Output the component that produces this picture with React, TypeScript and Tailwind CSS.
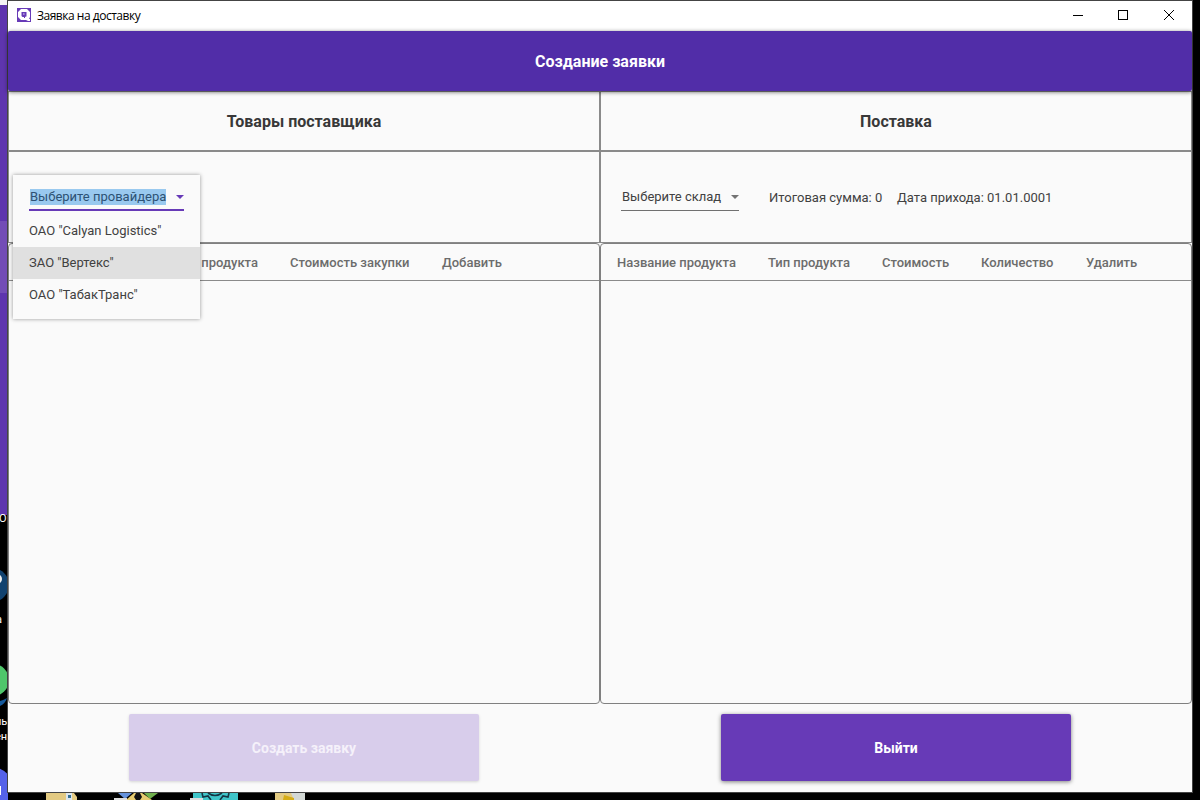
import React from "react";

const providers = ['ОАО "Calyan Logistics"', 'ЗАО "Вертекс"', 'ОАО "ТабакТранс"'];

function TitleBar() {
  return (
    <div className="flex h-[30px] shrink-0 items-center bg-white pl-[9px]">
      <svg width="14" height="14" viewBox="0 0 14 14" className="mb-0.5">
        <rect width="14" height="14" fill="#673ab7" />
        <path d="M4 1h6l3 3v5l-1 2h1v2h-2l-2-1H4L1 9V4z" fill="#fff" />
        <path d="M4.5 4h5v4.5H9l-1 .5v1H7V9H5.5l-1-1z" fill="#673ab7" />
        <path d="M6 5.2h1.6v1.6H6z" fill="#b9a4de" />
      </svg>
      <span className="ml-1.5 grow font-['Open_Sans',sans-serif] text-[12px] leading-4 tracking-[-0.48px] text-black">Заявка на доставку</span>
      <svg width="106" height="12" viewBox="0 0 106 12" fill="none" stroke="#000" className="mr-[14px] mb-0.5" shapeRendering="crispEdges">
        <path d="M1 6.5h10M46.5 1.5h9v9h-9z" />
        <path d="M92 1l10 10M102 1l-10 10" shapeRendering="auto" />
      </svg>
    </div>
  );
}

function Arrow({ color }: { color: string }) {
  return (
    <svg width="8" height="4" viewBox="0 0 8 4" className="shrink-0">
      <path d="M0 0h8L4 4z" fill={color} />
    </svg>
  );
}

function Header({ children }: { children: React.ReactNode }) {
  return (
    <div className="flex h-[60px] items-center justify-center border border-[#8a8a8a] pt-[2px] text-[16px] leading-[20px] font-bold text-[#383838]">
      {children}
    </div>
  );
}

function ProviderMenu() {
  return (
    <div className="absolute top-[23px] left-[4px] z-10 h-[144px] w-[187px] bg-[#fafafa] shadow-[0_0_4px_rgba(0,0,0,0.4)]">
      <div className="mx-4 flex h-[36px] items-center justify-between border-b-2 border-[#673ab7] pt-[10px]">
        <span className="ml-px bg-[#99c9ef] leading-[16px] whitespace-nowrap text-[#2d5274]">Выберите провайдера</span>
        <Arrow color="#673ab7" />
      </div>
      <div className="mt-[4px]">
        {providers.map((p, i) => (
          <div key={p} className={i === 1 ? "flex h-8 items-center bg-[#e0e0e0] px-4" : "flex h-8 items-center px-4"}>
            {p}
          </div>
        ))}
      </div>
    </div>
  );
}

function Table({ children }: { children: React.ReactNode }) {
  return (
    <div className="h-[461px] rounded-[4px] border border-[#808080]">
      <div className="flex h-[37px] items-center border-b border-[#8a8a8a] pt-[2px] pl-4 font-medium whitespace-nowrap text-[#6c6c6c]">
        {children}
      </div>
    </div>
  );
}

export default function App() {
  return (
    <div className="relative flex h-[800px] w-[1200px] overflow-hidden bg-black font-[Roboto,sans-serif] text-[13px] text-[#414141]">
      <div className="relative h-full w-2 shrink-0 overflow-hidden">
        <div className="h-[5px] bg-[#f5f5f5]" />
        <div className="h-[216px] bg-[#5e35ae]" />
        <div className="h-[72px] bg-[#734db6]" />
        <div className="h-[222px] bg-[#5e35ae]" />
        <svg width="8" height="285" viewBox="0 515 8 285" className="absolute top-[515px] left-0">
          <circle cx="-8" cy="585" r="17" fill="#11426f" />
          <circle cx="-3" cy="579" r="5" fill="#eee" />
          <circle cx="-7" cy="680" r="16" fill="#4fc66b" />
          <path d="M0 701q4-1 7-3q-2 6-7 8z" fill="#15599c" />
          <circle cx="-9" cy="790" r="23" fill="#5562e8" />
          <path d="M0 786h1v9H0z" fill="#fff" />
        </svg>
        <div className="absolute top-[512px] left-[-1px] text-[11px] leading-[14px] text-white">О</div>
        <div className="absolute top-[613px] left-[-4px] text-[11px] leading-[14px] text-white">а</div>
        <div className="absolute top-[714px] left-[-5px] text-[11px] leading-[15px] text-white">ль<br />ен</div>
      </div>
      <div className="relative mt-px flex h-[791px] w-[1184px] shrink-0 flex-col bg-[#fafafa] shadow-[0_0_0_1px_#444]">
        <TitleBar />
        <div className="relative z-10 flex h-[60px] shrink-0 items-center justify-center rounded-[2px] bg-[#512da8] pt-[2px] text-[16px] leading-[20px] font-bold text-white shadow-[0_1px_4px_rgba(0,0,0,0.6)]">
          Создание заявки
        </div>
        <div className="grid grid-cols-2">
          <section>
            <Header>Товары поставщика</Header>
            <div className="relative h-[92px] border border-[#8a8a8a]">
              <ProviderMenu />
            </div>
            <Table>
              <span className="w-[151px]">Название продукта</span>
              <span className="w-[114px]">Тип продукта</span>
              <span className="w-[152px]">Стоимость закупки</span>
              <span>Добавить</span>
            </Table>
          </section>
          <section>
            <Header>Поставка</Header>
            <div className="flex h-[92px] items-center border border-[#8a8a8a] pt-[2px] pl-5 whitespace-nowrap">
              <div className="flex h-[26px] w-[118px] items-center justify-between border-b border-[#707070] pb-[2px] pl-px">
                Выберите склад
                <Arrow color="#737373" />
              </div>
              <span className="ml-[30px] w-[128px]">Итоговая сумма: 0</span>
              <span>Дата прихода: 01.01.0001</span>
            </div>
            <Table>
              <span className="w-[151px]">Название продукта</span>
              <span className="w-[114px]">Тип продукта</span>
              <span className="w-[99px]">Стоимость</span>
              <span className="w-[105px]">Количество</span>
              <span>Удалить</span>
            </Table>
          </section>
        </div>
        <div className="grid grid-cols-2 justify-items-center pt-[10px] text-[14px] font-bold">
          <button className="h-[67px] w-[350px] rounded-[2px] bg-[#d8cdeb] pt-[2px] text-[#f5f1fa] shadow-[0_1px_3px_rgba(0,0,0,0.15)]">Создать заявку</button>
          <button className="h-[67px] w-[350px] rounded-[2px] bg-[#673ab7] pt-[2px] text-white shadow-[0_1px_4px_rgba(0,0,0,0.5)]">Выйти</button>
        </div>
      </div>
      <svg width="280" height="8" viewBox="40 792 280 8" className="absolute top-[792px] left-[40px]">
        <path d="M46 793h28l3 4v3H46z" fill="#e3ca82" />
        <path d="M66 793h6v7h-6z" fill="#dce6ed" />
        <path d="M68 795h3v3h-3z" fill="#356f91" />
        <path d="M118 793h14l-7 6z" fill="#6693dc" />
        <path d="M144 793h14l-8 6z" fill="#70b04d" />
        <path d="M126 800l8-7h8l10 7z" fill="#e7cb70" />
        <path d="M136 793h4l2 4-2 3h-4l-2-3z" fill="#111" />
        <path d="M193 793h45v7h-45z" fill="#3fc5c9" />
        <path d="M202 793l1 4 5-1 3 4M229 793l-1 4-5-1-3 4M208 793q7 5 14 0" fill="none" stroke="#153442" strokeWidth="1.6" />
        <path d="M114 798h13v2h-13zM190 798h13v2h-13z" fill="#ddd" />
        <path d="M275 793h30v7h-30z" fill="#e3ca82" />
        <path d="M291 793h14v7h-11z" fill="#d3d8d5" />
        <path d="M284 795l10 3v2h-11z" fill="#d6ad18" />
      </svg>
    </div>
  );
}
